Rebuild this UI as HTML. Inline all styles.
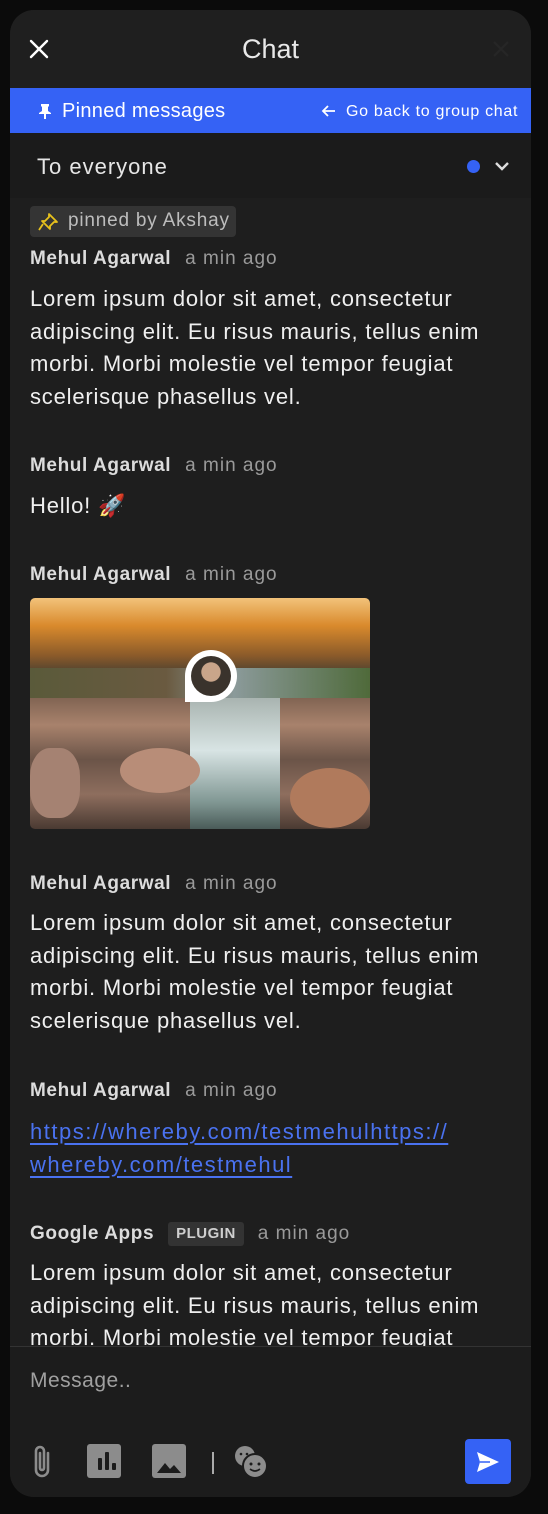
<!DOCTYPE html>
<html><head><meta charset="utf-8"><style>
*{margin:0;padding:0;box-sizing:border-box}
body{width:548px;height:1514px;background:#0b0b0b;font-family:"Liberation Sans",sans-serif;position:relative;overflow:hidden;color:#ececec}
.panel{position:absolute;left:10px;top:10px;width:521px;height:1487px;background:#1e1e1e;border-radius:24px;overflow:hidden}
.a{position:absolute;white-space:nowrap}
.name{font-weight:bold;font-size:19px;letter-spacing:0.6px;color:#dcdcdc;line-height:22px;margin-top:2px}
.time{font-weight:normal;color:#9a9a9a;margin-left:14px;letter-spacing:1px}
.t{font-size:22px;letter-spacing:0.8px;line-height:32.7px;color:#efefef;left:20px;margin-top:1px}
.link{color:#4a72f0;text-decoration:underline;text-underline-offset:4px;letter-spacing:1.5px}
</style></head><body>
<div class="panel">
  <div class="a" style="left:0;top:0;width:521px;height:78px;background:#1f1f1f"></div>
  <svg class="a" style="left:18px;top:28px" width="22" height="22" viewBox="0 0 22 22"><path d="M3 3L19 19M19 3L3 19" stroke="#fff" stroke-width="2.4" stroke-linecap="round"/></svg>
  <div class="a" style="left:0;width:521px;top:22px;text-align:center;font-size:27px;color:#e8e8e8;line-height:34px">Chat</div>
  <svg class="a" style="left:482px;top:30px" width="18" height="18" viewBox="0 0 18 18"><path d="M2 2L16 16M16 2L2 16" stroke="#262626" stroke-width="2"/></svg>
  <div class="a" style="left:0;top:78px;width:521px;height:45px;background:#3562f5"></div>
  <svg class="a" style="left:28px;top:93px" width="14" height="16" viewBox="0 0 14 16"><path d="M3 1h8v2l-1 1v4l3 2v1H8v5H6v-5H1v-1l3-2V4L3 3z" fill="#fff"/></svg>
  <div class="a" style="left:52px;top:89px;font-size:20px;letter-spacing:0.3px;line-height:24px;color:#fff">Pinned messages</div>
  <svg class="a" style="left:311px;top:94px" width="15" height="14" viewBox="0 0 15 14"><path d="M14 7H2M7 2L2 7l5 5" stroke="#fff" stroke-width="1.8" fill="none"/></svg>
  <div class="a" style="left:336px;top:91px;font-size:16px;letter-spacing:0.7px;line-height:22px;color:#fff">Go back to group chat</div>
  <div class="a" style="left:0;top:123px;width:521px;height:65px;background:#1b1b1b"></div>
  <div class="a" style="left:27px;top:143px;font-size:22px;letter-spacing:1px;line-height:28px;color:#e6e6e6">To everyone</div>
  <div class="a" style="left:457px;top:150px;width:13px;height:13px;border-radius:50%;background:#3562f5"></div>
  <svg class="a" style="left:484px;top:150px" width="16" height="12" viewBox="0 0 16 12"><path d="M2 3l6 6 6-6" stroke="#ddd" stroke-width="2.4" fill="none"/></svg>

  <div class="a" style="left:20px;top:196px;width:206px;height:31px;background:#343434;border-radius:4px"></div>
  <svg class="a" style="left:27px;top:202px" width="22" height="20" viewBox="0 0 22 20"><path d="M12 2l8 8-3 0-4 4 0 3-8-8 3 0 4-4zM6 12l-4 6" stroke="#e8c21c" stroke-width="1.8" fill="none" stroke-linejoin="round"/></svg>
  <div class="a" style="left:58px;top:199px;font-size:19px;letter-spacing:0.8px;line-height:24px;color:#bdbdbd">pinned by Akshay</div>

  <div class="a name" style="left:20px;top:236px">Mehul Agarwal<span class="time">a min ago</span></div>
  <div class="a t" style="top:272px">Lorem ipsum dolor sit amet, consectetur<br>adipiscing elit. Eu risus mauris, tellus enim<br>morbi. Morbi molestie vel tempor feugiat<br>scelerisque phasellus vel.</div>

  <div class="a name" style="left:20px;top:443px">Mehul Agarwal<span class="time">a min ago</span></div>
  <div class="a t" style="top:479px">Hello! 🚀</div>

  <div class="a name" style="left:20px;top:552px">Mehul Agarwal<span class="time">a min ago</span></div>
  <div class="a" style="left:20px;top:588px;width:340px;height:231px;border-radius:5px;overflow:hidden;background:linear-gradient(180deg,#f2c27a 0%,#d98a2c 12%,#8a5a2a 25%,#4a4030 33%,#7d6150 42%,#a8826c 55%,#6b5448 70%,#8e6e5e 85%,#4a3a32 100%)">
    <div class="a" style="left:0;top:70px;width:340px;height:30px;background:linear-gradient(90deg,#5a5a3a,#6a5a40 40%,#8b9a9a 60%,#4f6a3a)"></div>
    <div class="a" style="left:160px;top:100px;width:90px;height:131px;background:linear-gradient(180deg,#a9b4b0,#d8e4e4 40%,#7f9692 80%,#4a5b58)"></div>
    <div class="a" style="left:90px;top:150px;width:80px;height:45px;border-radius:50%;background:#b88d78"></div>
    <div class="a" style="left:260px;top:170px;width:80px;height:60px;border-radius:50%;background:#b07a5c"></div>
    <div class="a" style="left:0;top:150px;width:50px;height:70px;border-radius:40%;background:#a58272"></div>
    <div class="a" style="left:155px;top:52px;width:52px;height:52px;border-radius:50% 50% 50% 0;background:#fff"></div>
    <div class="a" style="left:161px;top:58px;width:40px;height:40px;border-radius:50%;background:radial-gradient(circle at 50% 40%,#c9a58a 0 30%,#3a332c 32% 100%)"></div>
  </div>

  <div class="a name" style="left:20px;top:861px">Mehul Agarwal<span class="time">a min ago</span></div>
  <div class="a t" style="top:896px">Lorem ipsum dolor sit amet, consectetur<br>adipiscing elit. Eu risus mauris, tellus enim<br>morbi. Morbi molestie vel tempor feugiat<br>scelerisque phasellus vel.</div>

  <div class="a name" style="left:20px;top:1068px">Mehul Agarwal<span class="time">a min ago</span></div>
  <div class="a t link" style="top:1105px">https://whereby.com/testmehulhttps://<br>whereby.com/testmehul</div>

  <div class="a name" style="left:20px;top:1210px">Google Apps<span style="display:inline-block;margin-left:14px;background:#333;color:#cfcfcf;font-size:15px;padding:0 8px;border-radius:3px;line-height:24px;vertical-align:1px;letter-spacing:0.5px">PLUGIN</span><span class="time" style="margin-left:14px">a min ago</span></div>
  <div class="a t" style="top:1246px;height:89px;overflow:hidden">Lorem ipsum dolor sit amet, consectetur<br>adipiscing elit. Eu risus mauris, tellus enim<br>morbi. Morbi molestie vel tempor feugiat</div>

  <div class="a" style="left:0;top:1336px;width:521px;height:151px;background:#1c1c1c;border-top:1px solid #333"></div>
  <div class="a" style="left:20px;top:1357px;font-size:21px;letter-spacing:0.5px;line-height:28px;color:#a0a0a0">Message..</div>
  <svg class="a" style="left:19px;top:1433px" width="26" height="38" viewBox="0 0 26 38"><path d="M19 10v17a6 6 0 0 1-12 0V8a4 4 0 0 1 8 0v17a2 2 0 0 1-4 0V10" stroke="#8c8c8c" stroke-width="2.6" fill="none" stroke-linecap="round"/></svg>
  <div class="a" style="left:77px;top:1434px;width:34px;height:34px;border-radius:3px;background:#8c8c8c"></div>
  <div class="a" style="left:88px;top:1448px;width:4px;height:12px;background:#1c1c1c;border-radius:1px"></div>
  <div class="a" style="left:95px;top:1442px;width:4px;height:18px;background:#1c1c1c;border-radius:1px"></div>
  <div class="a" style="left:102px;top:1453px;width:4px;height:7px;background:#1c1c1c;border-radius:1px"></div>
  <div class="a" style="left:142px;top:1434px;width:34px;height:34px;border-radius:3px;background:#8c8c8c"></div>
  <svg class="a" style="left:142px;top:1434px" width="34" height="34" viewBox="0 0 34 34"><path d="M5 29l8-10 5 6 4-4 7 8z" fill="#1c1c1c"/></svg>
  <div class="a" style="left:202px;top:1442px;width:2px;height:22px;background:#aaa"></div>
  <svg class="a" style="left:223px;top:1434px" width="36" height="36" viewBox="0 0 36 36"><circle cx="12" cy="12" r="10" fill="#8c8c8c"/><circle cx="22" cy="22" r="12" fill="#8c8c8c" stroke="#1c1c1c" stroke-width="2"/><circle cx="18" cy="20" r="1.5" fill="#1c1c1c"/><circle cx="26" cy="20" r="1.5" fill="#1c1c1c"/><path d="M17 25q5 4 10 0" stroke="#1c1c1c" stroke-width="1.6" fill="none"/><circle cx="8" cy="10" r="1.3" fill="#1c1c1c"/><circle cx="14" cy="10" r="1.3" fill="#1c1c1c"/></svg>
  <div class="a" style="left:455px;top:1429px;width:46px;height:45px;border-radius:4px;background:#3562f5"></div>
  <svg class="a" style="left:465px;top:1440px" width="26" height="24" viewBox="0 0 26 24"><path d="M2 2l22 10L2 22l3-10z" fill="#fff"/><path d="M5 12h10" stroke="#3562f5" stroke-width="1.5"/></svg>
</div>
</body></html>
